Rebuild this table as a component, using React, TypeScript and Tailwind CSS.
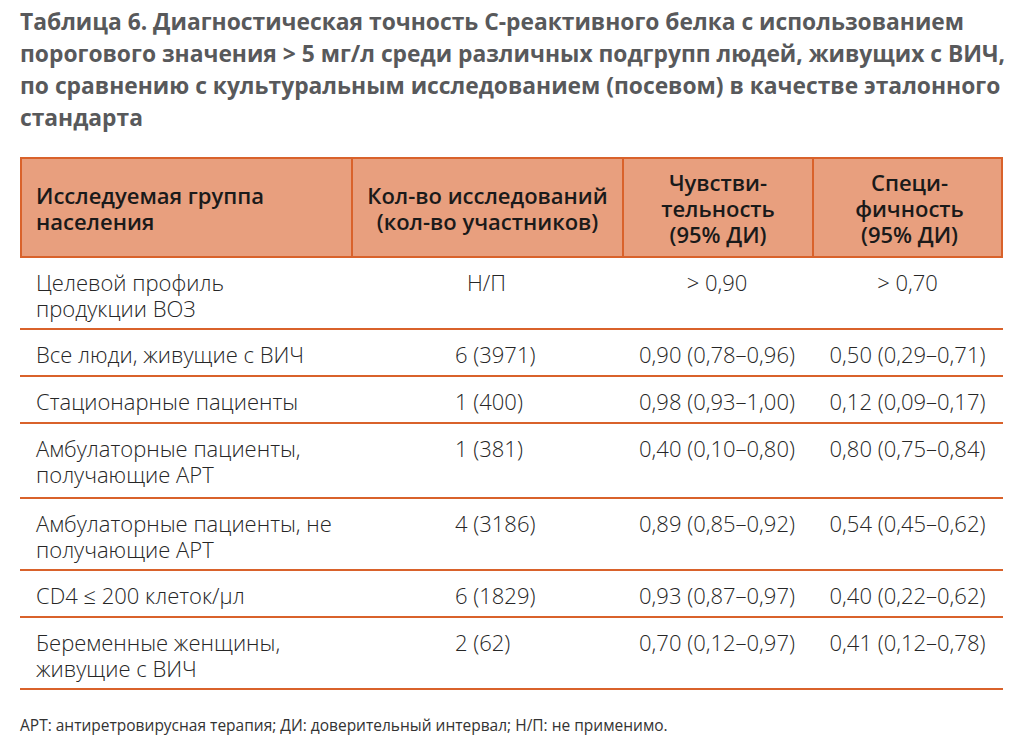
import React from "react";

const rows: { g: string[]; n: string; center?: boolean; s: string; sp: string; h: number }[] = [
  { g: ["Целевой профиль", "продукции ВОЗ"], n: "Н/П", center: true, s: "> 0,90", sp: "> 0,70", h: 72 },
  { g: ["Все люди, живущие с ВИЧ"], n: "6 (3971)", s: "0,90 (0,78–0,96)", sp: "0,50 (0,29–0,71)", h: 47 },
  { g: ["Стационарные пациенты"], n: "1 (400)", s: "0,98 (0,93–1,00)", sp: "0,12 (0,09–0,17)", h: 47 },
  { g: ["Амбулаторные пациенты,", "получающие АРТ"], n: "1 (381)", s: "0,40 (0,10–0,80)", sp: "0,80 (0,75–0,84)", h: 75 },
  { g: ["Амбулаторные пациенты, не", "получающие АРТ"], n: "4 (3186)", s: "0,89 (0,85–0,92)", sp: "0,54 (0,45–0,62)", h: 72 },
  { g: ["CD4 ≤ 200 клеток/µл"], n: "6 (1829)", s: "0,93 (0,87–0,97)", sp: "0,40 (0,22–0,62)", h: 47 },
  { g: ["Беременные женщины,", "живущие с ВИЧ"], n: "2 (62)", s: "0,70 (0,12–0,97)", sp: "0,41 (0,12–0,78)", h: 72 },
];

export default function App() {
  return (
    <div
      className="w-[1024px] h-[751px] bg-white overflow-hidden px-[20px] pt-[6px]"
      style={{ fontFamily: '"Open Sans", "Noto Sans", sans-serif' }}
    >
      <h1 className="text-[22.8px] leading-[32px] font-bold text-[#58595b] whitespace-nowrap">
        Таблица 6. Диагностическая точность С-реактивного белка с использованием
        <br />
        порогового значения &gt; 5 мг/л среди различных подгрупп людей, живущих с ВИЧ,
        <br />
        по сравнению с культуральным исследованием (посевом) в качестве эталонного
        <br />
        стандарта
      </h1>

      <div className="mt-[23px] w-[983px]">
        <div className="grid grid-cols-[331px_271px_190px_191px] bg-[#e89f7e] border-2 border-[#d9622b] h-[101px] text-[22px] leading-[26px] font-semibold text-[#1a1a1a]">
          <div className="flex items-center pl-[14px] border-r-2 border-[#d9622b]">
            <div>Исследуемая группа<br />населения</div>
          </div>
          <div className="flex items-center justify-center text-center border-r-2 border-[#d9622b]">
            <div>Кол-во исследований<br />(кол-во участников)</div>
          </div>
          <div className="flex items-center justify-center text-center border-r-2 border-[#d9622b]">
            <div>Чувстви-<br />тельность<br />(95% ДИ)</div>
          </div>
          <div className="flex items-center justify-center text-center">
            <div>Специ-<br />фичность<br />(95% ДИ)</div>
          </div>
        </div>

        {rows.map((r, i) => (
          <div
            key={i}
            className="grid grid-cols-[331px_271px_190px_191px] border-b-2 border-[#d9622b] text-[22px] leading-[26px] font-light text-[#262626] pt-[11px] whitespace-nowrap"
            style={{ height: r.h }}
          >
            <div className="pl-[16px]">
              {r.g.map((l, j) => (
                <div key={j}>{l}</div>
              ))}
            </div>
            <div className={r.center ? "text-center" : "pl-[104px]"}>{r.n}</div>
            <div className="text-center">{r.s}</div>
            <div className="text-center">{r.sp}</div>
          </div>
        ))}

        <div className="mt-[25px] text-[15.5px] leading-[20px] text-[#333]">
          АРТ: антиретровирусная терапия; ДИ: доверительный интервал; Н/П: не применимо.
        </div>
      </div>
    </div>
  );
}
